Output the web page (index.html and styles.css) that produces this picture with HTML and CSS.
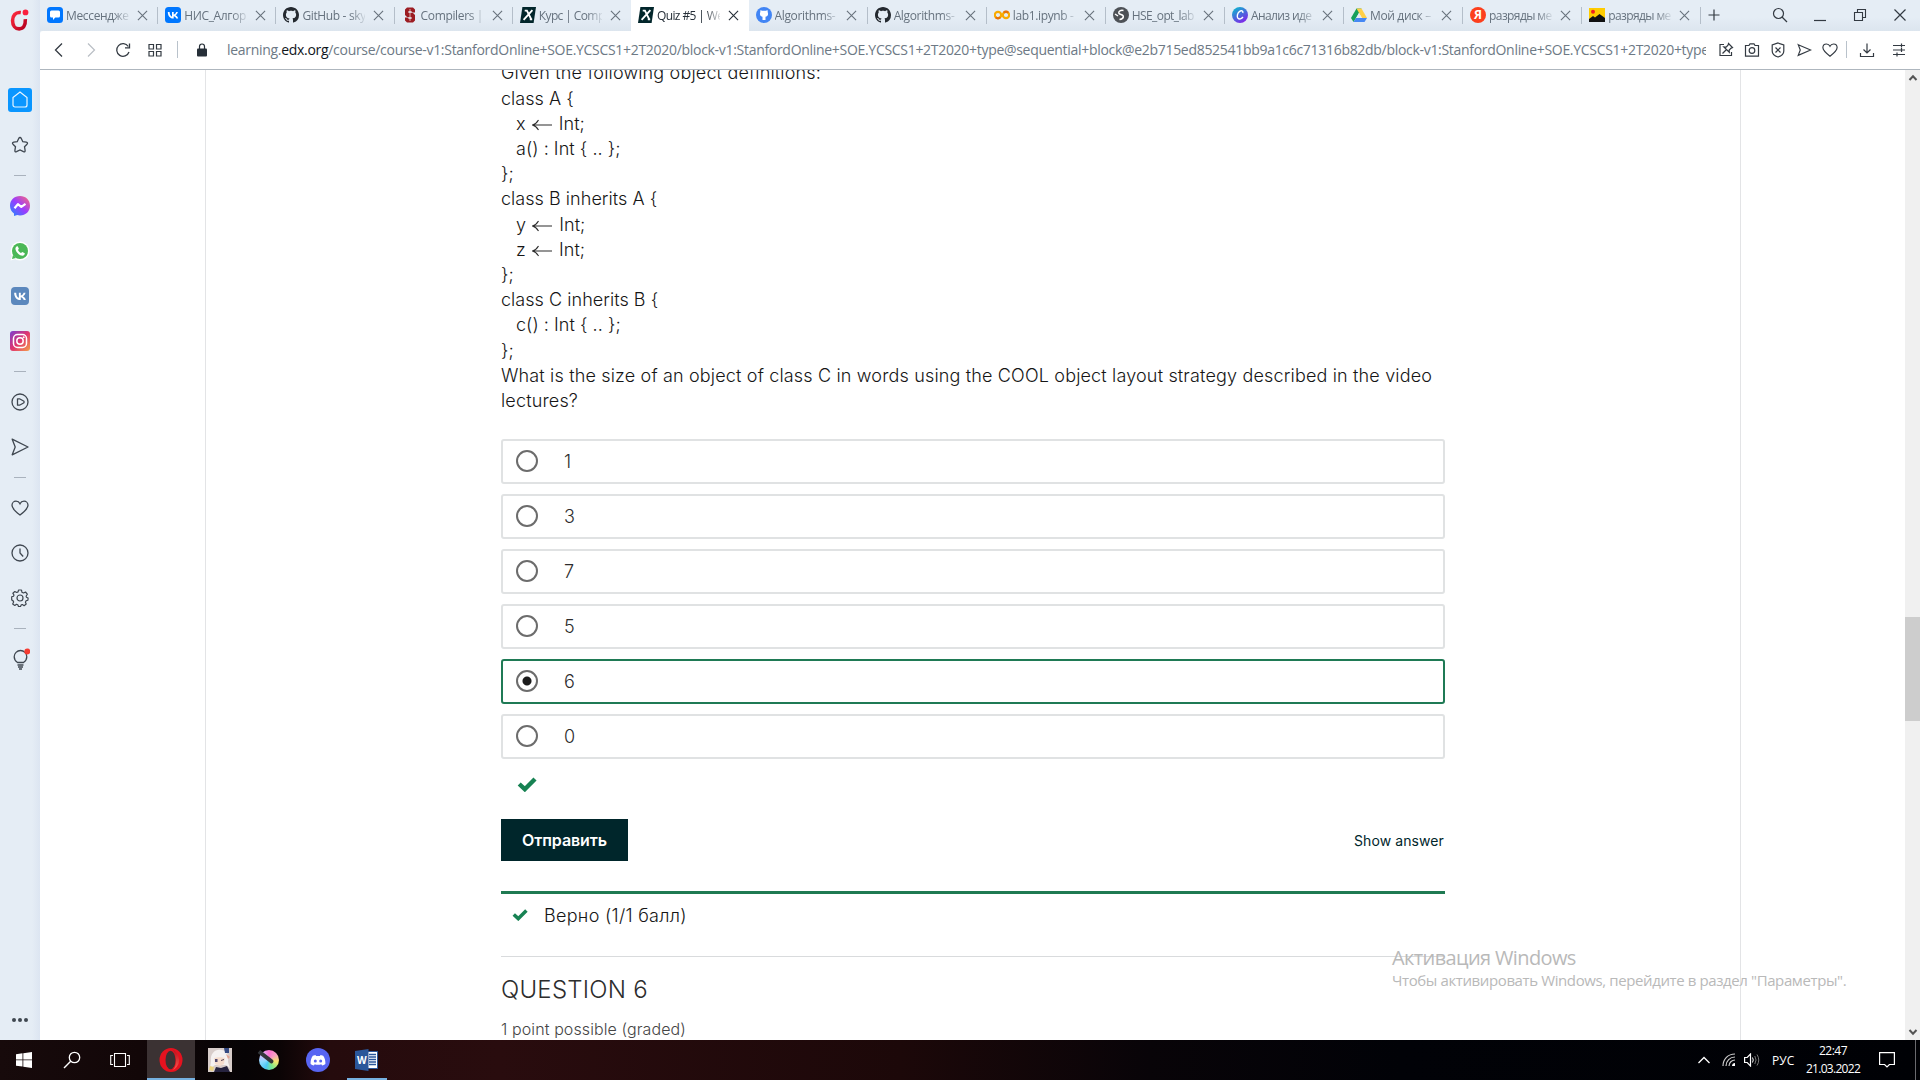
FILE: index.html
```html
<!DOCTYPE html>
<html lang="ru">
<head>
<meta charset="utf-8">
<title>Quiz #5 | Week 5 | Compilers</title>
<link rel="stylesheet" href="styles.css">
</head>
<body>
<svg class="defs" width="0" height="0">
  <defs>
    <linearGradient id="gMsg" x1="0" y1="1" x2="1" y2="0"><stop offset="0" stop-color="#1a8cff"/><stop offset=".5" stop-color="#9a3cff"/><stop offset="1" stop-color="#ff6d73"/></linearGradient>
    <linearGradient id="gIg" x1="0" y1="0" x2="1" y2="1"><stop offset="0" stop-color="#7a3fd0"/><stop offset=".5" stop-color="#e0356f"/><stop offset="1" stop-color="#f5a04b"/></linearGradient>
    <linearGradient id="gCanva" x1="0" y1="0" x2=".6" y2="1"><stop offset="0" stop-color="#00c4cc"/><stop offset="1" stop-color="#7d2ae8"/></linearGradient>
    <linearGradient id="gOpera" x1="0" y1="0" x2="1" y2="1"><stop offset="0" stop-color="#ff2b3f"/><stop offset="1" stop-color="#b4001e"/></linearGradient>
    <linearGradient id="gOperaIn" x1="0" y1="0" x2="0" y2="1"><stop offset="0" stop-color="#b30f1c"/><stop offset="1" stop-color="#ff5a50"/></linearGradient>
    <symbol id="x" viewBox="0 0 12 12"><path d="M1 1l10 10M11 1L1 11" fill="none" stroke="currentColor" stroke-width="1.2"/></symbol>
    <symbol id="github" viewBox="0 0 16 16"><path fill="currentColor" fill-rule="evenodd" d="M8 0C3.58 0 0 3.58 0 8c0 3.54 2.29 6.53 5.47 7.59.4.07.55-.17.55-.38 0-.19-.01-.82-.01-1.49-2.01.37-2.53-.49-2.69-.94-.09-.23-.48-.94-.82-1.13-.28-.15-.68-.52-.01-.53.63-.01 1.08.58 1.23.82.72 1.21 1.87.87 2.33.66.07-.52.28-.87.51-1.07-1.78-.2-3.64-.89-3.64-3.95 0-.87.31-1.59.82-2.15-.08-.2-.36-1.02.08-2.12 0 0 .67-.21 2.2.82.64-.18 1.32-.27 2-.27s1.36.09 2 .27c1.53-1.04 2.2-.82 2.2-.82.44 1.1.16 1.92.08 2.12.51.56.82 1.27.82 2.15 0 3.07-1.87 3.75-3.65 3.95.29.25.54.73.54 1.48 0 1.07-.01 1.93-.01 2.2 0 .21.15.46.55.38A8.01 8.01 0 0016 8c0-4.42-3.58-8-8-8z"/></symbol>
    <symbol id="edx" viewBox="0 0 16 16"><path fill="#02262b" d="M2.4 0H16l-2.4 16H0z"/><path d="M4.7 3.6h2.2l4.4 8.8M12.4 3.2l-8.8 9.6M9.8 12.4h2.4" fill="none" stroke="#fff" stroke-width="1.9"/></symbol>
    <symbol id="vk" viewBox="0 0 16 16"><path fill="#fff" d="M8.6 11.6C5 11.6 2.9 9.1 2.8 5h1.8c.1 3 1.4 4.3 2.4 4.5V5h1.7v2.6c1-.1 2.1-1.3 2.500-2.6h1.700c-.3 1.600-1.400 2.700-2.300 3.200.8.4 2.100 1.400 2.600 3.400h-1.900c-.4-1.300-1.400-2.200-2.600-2.400v2.400z"/></symbol>
    <symbol id="heart" viewBox="0 0 18 18"><path d="M9 16C4 12.300 1 9.500 1 6.300 1 3.900 2.800 2.200 5 2.200c1.700 0 3.200.9 4 2.500.8-1.600 2.300-2.500 4-2.500 2.200 0 4 1.700 4 4.100 0 3.200-3 6-8 9.700z" fill="none" stroke="currentColor" stroke-width="1.300"/></symbol>
    <symbol id="send" viewBox="0 0 18 18"><path d="M1.200 1.200L17 9 1.200 16.800 4.200 9z" fill="none" stroke="currentColor" stroke-width="1.300" stroke-linejoin="round"/></symbol>
    <symbol id="check" viewBox="0 0 20 16"><path d="M2.200 8l5.600 5.200L18 3" fill="none" stroke="#178253" stroke-width="4.400"/></symbol>
    <symbol id="arrow" viewBox="0 0 20 12"><path d="M.5 6H20M6.500 1C5 3.500 3 5.300.5 6 3 6.700 5 8.500 6.500 11" fill="none" stroke="#2d2d2d" stroke-width="1.100"/></symbol>
  </defs>
</svg>

<div class="desktop">
  <div class="browser">
    <aside class="sidebar">
      <svg class="logo" viewBox="0 0 22 26"><path d="M12 4.200C5.500 3.200 2.200 8 2.200 13.500 2.200 19.500 5.500 23.500 10 23.500c5 0 7.600-4 7.300-11.500" fill="none" stroke="url(#gOpera)" stroke-width="4.200"/><circle cx="17.500" cy="4" r="3.400" fill="#fa1e3c"/></svg>
      <div class="side-list">
        <div class="side home"><svg width="16" height="18" viewBox="0 0 16 18"><path d="M1 6.500L8 1l7 5.500V14a2 2 0 0 1-2 2H3a2 2 0 0 1-2-2z" fill="none" stroke="#e8f5ff" stroke-width="1.200"/></svg></div>
        <div class="side"><svg width="18" height="18" viewBox="0 0 18 18"><path d="M9 1.500q.8 0 1.300 1l1.500 3.200 3.500.5q2 .4.700 2L13.500 10.700l.6 3.600q.2 2-1.600 1.300L9 14l-3.500 1.600q-1.800.7-1.600-1.300l.6-3.600L2 8.200q-1.300-1.600.7-2l3.500-.5L7.700 2.500q.5-1 1.300-1z" fill="none" stroke="currentColor" stroke-width="1.300"/></svg></div>
        <i class="side-sep"></i>
        <div class="side"><svg width="20" height="20" viewBox="0 0 20 20"><path d="M10 0c5.800 0 10 4.200 10 9.700s-4.200 9.700-10 9.700c-1 0-1.900-.1-2.800-.4L4 20v-2.600C1.500 15.500 0 13 0 9.700 0 4.200 4.200 0 10 0z" fill="url(#gMsg)"/><path d="M4.500 12.200l3.400-4 3.400 2.600 4.200-3" fill="none" stroke="#fff" stroke-width="2.200" stroke-linejoin="round"/></svg></div>
        <div class="side"><svg width="20" height="20" viewBox="0 0 20 20"><circle cx="10" cy="10" r="9.500" fill="#fff"/><path d="M.5 19.500l1.500-5 4 3.500z" fill="#fff"/><circle cx="10" cy="10" r="8" fill="#4bb857"/><path d="M2 18l1-4 3 3z" fill="#4bb857"/><path d="M6.500 5.500l1.200-.3 1.200 2.600-.9 1.300c.7 1.500 1.600 2.300 3 3l1.300-1 2.500 1.200c0 1.600-1 2.400-2.400 2.400-3.500-.3-6.600-3.500-7-6.900 0-1 .4-1.800 1.100-2.300z" fill="#fff"/></svg></div>
        <div class="side"><svg width="18" height="18" viewBox="0 0 16 16"><rect width="16" height="16" rx="3.500" fill="#5b88bd"/><use href="#vk"/></svg></div>
        <div class="side"><svg width="20" height="20" viewBox="0 0 20 20"><rect width="20" height="20" rx="3" fill="url(#gIg)"/><rect x="3.500" y="3.500" width="13" height="13" rx="4" fill="none" stroke="#fff" stroke-width="1.500"/><circle cx="10" cy="10" r="3.200" fill="none" stroke="#fff" stroke-width="1.500"/><circle cx="13.700" cy="6.300" r="1" fill="#fff"/></svg></div>
        <i class="side-sep"></i>
        <div class="side"><svg width="18" height="18" viewBox="0 0 18 18"><circle cx="9" cy="9" r="8" fill="none" stroke="currentColor" stroke-width="1.300"/><path d="M6.500 5.800v6.400h2L13 9.800V8.200L8.500 5.800z" fill="none" stroke="currentColor" stroke-width="1.300" stroke-linejoin="round"/></svg></div>
        <div class="side"><svg width="18" height="18"><use href="#send"/></svg></div>
        <i class="side-sep"></i>
        <div class="side"><svg width="18" height="18"><use href="#heart"/></svg></div>
        <div class="side"><svg width="18" height="18" viewBox="0 0 18 18"><circle cx="9" cy="9" r="8" fill="none" stroke="currentColor" stroke-width="1.300"/><path d="M9 4.500V9l3.200 3.500" fill="none" stroke="currentColor" stroke-width="1.300"/></svg></div>
        <div class="side"><svg width="18" height="18" viewBox="0 0 18 18"><path d="M7.500 1h3l.4 2.200 1.600.8 2-1 1.800 2.200-1.200 2 .3 1 1.700.8-.2 2.200-1.800.6-.7 1.400.8 1.800-2.100 1.700-1.700-1.200-1.200.4-.7 1.600H7.500l-.7-1.800-1.300-.4-1.700 1.200-2.100-1.600.9-2-.7-1.300L.7 11V7.800l1.800-.6.500-1.200-1.100-1.700L3.800 2.500l1.900 1 1.400-.6z" fill="none" stroke="currentColor" stroke-width="1.200" stroke-linejoin="round"/><circle cx="9" cy="9" r="3" fill="none" stroke="currentColor" stroke-width="1.200"/></svg></div>
        <i class="side-sep"></i>
        <div class="side"><svg width="20" height="22" viewBox="0 0 20 22"><path d="M7.500 14.500C5.500 13.200 4.200 11.300 4.200 8.800a6.300 6.300 0 0 1 12.600 0c0 2.500-1.300 4.400-3.300 5.700zM7.500 17h6M8 19h5M9 21h3" fill="none" stroke="currentColor" stroke-width="1.300"/><circle cx="17.300" cy="3.500" r="3" fill="#f53b30"/></svg></div>
      </div>
      <div class="dots"><i></i><i></i><i></i></div>
    </aside>

    <div class="main">
      <div class="tabbar">
        <div class="tab lead"><svg class="fav" viewBox="0 0 16 16"><rect width="16" height="16" rx="3.500" fill="#07f"/><path d="M4.500 3.500h7q1.500 0 1.500 1.500v4q0 1.500-1.500 1.500H8.300L6 13v-2.500H4.500Q3 10.500 3 9V5q0-1.500 1.500-1.500z" fill="#fff"/></svg><span>Мессендже</span><svg class="cl"><use href="#x"/></svg></div>
        <div class="tab lead"><svg class="fav" viewBox="0 0 16 16"><rect width="16" height="16" rx="3.500" fill="#07f"/><use href="#vk"/></svg><span>НИС_Алгор</span><svg class="cl"><use href="#x"/></svg></div>
        <div class="tab lead"><svg class="fav dark"><use href="#github"/></svg><span>GitHub - sky</span><svg class="cl"><use href="#x"/></svg></div>
        <div class="tab lead"><svg class="fav" viewBox="0 0 16 16"><path d="M5 .5h6l2 2v3H9.500V4h-3v2H11l2 2v5.500l-2 2H5l-2-2v-3h3.500V12h3v-2H5L3 8V2.500z" fill="#9c1c22"/><path d="M8 2v12" stroke="#d9aaa9" stroke-width="1"/></svg><span>Compilers |</span><svg class="cl"><use href="#x"/></svg></div>
        <div class="tab lead last"><svg class="fav"><use href="#edx"/></svg><span class="tight">Курс | Comp</span><svg class="cl"><use href="#x"/></svg></div>
        <div class="tab active"><svg class="fav"><use href="#edx"/></svg><span class="tight">Quiz #5 | We</span><svg class="cl"><use href="#x"/></svg></div>
        <div class="tab"><svg class="fav" viewBox="0 0 16 16"><circle cx="8" cy="8" r="8" fill="#4285f4"/><path d="M4.500 3l1.500.8h4l1.500-.8.300 2.500c1 3-1 4-2.300 4.300V13h-3V9.800C5.200 9.500 3.200 8.500 4.200 5.500z" fill="#fff"/></svg><span>Algorithms-</span><svg class="cl"><use href="#x"/></svg></div>
        <div class="tab"><svg class="fav dark"><use href="#github"/></svg><span>Algorithms-</span><svg class="cl"><use href="#x"/></svg></div>
        <div class="tab"><svg class="fav" viewBox="0 0 16 16"><circle cx="4" cy="8" r="3.200" fill="none" stroke="#f9ab00" stroke-width="2.200"/><circle cx="12" cy="8" r="3.200" fill="none" stroke="#f9ab00" stroke-width="2.200"/><path d="M1.700 10.300a3.200 3.200 0 0 0 4.600 0M9.700 5.700a3.200 3.200 0 0 1 4.600 0" fill="none" stroke="#e8710a" stroke-width="2.200"/></svg><span>lab1.ipynb -</span><svg class="cl"><use href="#x"/></svg></div>
        <div class="tab"><svg class="fav" viewBox="0 0 16 16"><circle cx="8" cy="8" r="8" fill="#4d5156"/><path d="M10.500 3.500C7.500 3 5.500 4 5.800 6c.4 2 5 1.200 4.500 4-.3 1.500-2 2.300-3.800 2.500M2 7l3 2" fill="none" stroke="#fff" stroke-width="1.500"/></svg><span class="tight">HSE_opt_lab</span><svg class="cl"><use href="#x"/></svg></div>
        <div class="tab"><svg class="fav" viewBox="0 0 16 16"><circle cx="8" cy="8" r="8" fill="url(#gCanva)"/><path d="M10.800 6c.6-2-1.300-3-3.200-1.600C5.300 6 4.600 9.700 6 11.300c1.300 1.300 3.600.6 5-1.300" fill="none" stroke="#fff" stroke-width="1.400"/></svg><span class="tight">Анализ иде</span><svg class="cl"><use href="#x"/></svg></div>
        <div class="tab"><svg class="fav" viewBox="0 0 16 16"><path d="M5.500 1.500h5L5 11l-2.500 4L0 11z" fill="#17a05d"/><path d="M5.500 1.500h5L16 11h-5z" fill="#ffcf48"/><path d="M5 11h11l-2.500 4h-11z" fill="#4688f4"/><path d="M8 6l2.800 5H5.200z" fill="#e5edf5"/></svg><span>Мой диск –</span><svg class="cl"><use href="#x"/></svg></div>
        <div class="tab"><b class="fav ya">Я</b><span class="tight">разряды ме</span><svg class="cl"><use href="#x"/></svg></div>
        <div class="tab"><svg class="fav" viewBox="0 0 16 16"><path d="M0 1h16v14H0z" fill="#fc0"/><path d="M0 15v-3l4-3 2 1.500L10.500 7 16 11v4z" fill="#111"/><circle cx="4" cy="4.800" r="2" fill="#f01f1f"/></svg><span class="tight">разряды ме</span><svg class="cl"><use href="#x"/></svg></div>
        <svg class="plus" viewBox="0 0 12 12"><path d="M6 .5v11M.5 6h11" stroke="#333a42" stroke-width="1.200"/></svg>
        <div class="winctl">
          <svg viewBox="0 0 16 16"><circle cx="6.500" cy="6.500" r="5" fill="none" stroke="currentColor" stroke-width="1.200"/><path d="M10 10l5 5" stroke="currentColor" stroke-width="1.200"/></svg>
          <svg viewBox="0 0 16 16"><path d="M2 13.500h12" stroke="currentColor" stroke-width="1.200"/></svg>
          <svg viewBox="0 0 16 16"><path d="M2.500 5.500h8v8h-8zM5.500 5.500v-3h8v8h-3" fill="none" stroke="currentColor" stroke-width="1.100"/></svg>
          <svg viewBox="0 0 16 16"><path d="M2.500 2.500l11 11M13.500 2.500l-11 11" stroke="currentColor" stroke-width="1.200"/></svg>
        </div>
      </div>

      <div class="toolbar">
        <div class="nav">
          <svg viewBox="0 0 16 16"><path d="M11 1.500L4.500 8 11 14.500" fill="none" stroke="currentColor" stroke-width="1.300"/></svg>
          <svg class="off" viewBox="0 0 16 16"><path d="M5 1.500L11.500 8 5 14.500" fill="none" stroke="currentColor" stroke-width="1.200"/></svg>
          <svg viewBox="0 0 16 16"><path d="M14 10A6.300 6.300 0 1 1 13.300 4.500" fill="none" stroke="currentColor" stroke-width="1.300"/><path d="M14.500 1.500v4.300H10" fill="none" stroke="currentColor" stroke-width="1.300"/></svg>
          <svg viewBox="0 0 16 16"><path d="M2 2.500h4.500V7H2zM9.500 2.500H14V7H9.500zM2 9.500h4.500V14H2zM9.500 9.500H14V14H9.500z" fill="none" stroke="currentColor" stroke-width="1.200"/></svg>
        </div>
        <i class="vsep"></i>
        <svg class="lock" viewBox="0 0 12 14"><rect x="1" y="5.500" width="10" height="8" rx="1" fill="#262f38"/><path d="M3.500 6V3.500a2.500 2.500 0 0 1 5 0V6" fill="none" stroke="#262f38" stroke-width="1.200"/></svg>
        <div class="url">learning.<b>edx.org</b>/course/course-v1:StanfordOnline+SOE.YCSCS1+2T2020/block-v1:StanfordOnline+SOE.YCSCS1+2T2020+type@sequential+block@e2b715ed852541bb9a1c6c71316b82db/block-v1:StanfordOnline+SOE.YCSCS1+2T2020+type@vertical</div>
        <div class="actions">
          <svg viewBox="0 0 16 16"><path d="M6 2.500H2v11h11.500V10" fill="none" stroke="currentColor" stroke-width="1.200"/><path d="M10.500 1.500l4 4-1.300.6-2 2 .1 2.200L5.800 5l2.300.1 1.900-2zM8.500 7.500L4.500 11.500" fill="none" stroke="currentColor" stroke-width="1.200"/></svg>
          <svg viewBox="0 0 16 16"><path d="M1.500 3.500H5l1-1.700h4l1 1.700h3.500v10.700h-13z" fill="none" stroke="currentColor" stroke-width="1.200"/><circle cx="8" cy="8.500" r="2.800" fill="none" stroke="currentColor" stroke-width="1.200"/></svg>
          <svg viewBox="0 0 16 16"><path d="M8 1l5.800 2v6c0 3-2.500 5-5.800 6-3.300-1-5.800-3-5.800-6V3z" fill="none" stroke="currentColor" stroke-width="1.200"/><path d="M5.500 5.500l5 5M10.500 5.500l-5 5" stroke="currentColor" stroke-width="1.200"/></svg>
          <svg viewBox="0 0 18 18"><path d="M2.500 3L16.500 9 2.500 15l2.300-6z" fill="none" stroke="currentColor" stroke-width="1.300"/></svg>
          <svg><use href="#heart"/></svg>
        </div>
        <i class="vsep"></i>
        <svg class="dl" viewBox="0 0 16 16"><path d="M8 1.500v9M4.500 7.500L8 11l3.500-3.500M1.500 11v3.500h13V11" fill="none" stroke="currentColor" stroke-width="1.200"/></svg>
        <svg class="opt" viewBox="0 0 16 16"><path d="M2 3.500h12M2 8h12M2 12.500h12M10.500 1.500v4M10.500 6v4M6 10.500v4" fill="none" stroke="currentColor" stroke-width="1.200"/></svg>
      </div>

      <div class="viewport">
        <div class="page">
          <div class="unit">
            <div class="problem">
              <div class="ask">Given the following object definitions:</div>
              <div>class A {</div>
              <div class="in">x <svg class="ar"><use href="#arrow"/></svg> Int;</div>
              <div class="in">a() : Int { .. };</div>
              <div>};</div>
              <div>class B inherits A {</div>
              <div class="in">y <svg class="ar"><use href="#arrow"/></svg> Int;</div>
              <div class="in">z <svg class="ar"><use href="#arrow"/></svg> Int;</div>
              <div>};</div>
              <div>class C inherits B {</div>
              <div class="in">c() : Int { .. };</div>
              <div>};</div>
              <div class="ask">What is the size of an object of class C in words using the COOL object layout strategy described in the video lectures?</div>
            </div>
            <div class="choices">
              <label class="choice"><i class="radio"></i>1</label>
              <label class="choice"><i class="radio"></i>3</label>
              <label class="choice"><i class="radio"></i>7</label>
              <label class="choice"><i class="radio"></i>5</label>
              <label class="choice correct"><i class="radio on"></i>6</label>
              <label class="choice"><i class="radio"></i>0</label>
            </div>
            <svg class="mark"><use href="#check"/></svg>
            <div class="submit-row"><button class="submit">Отправить</button><span class="show">Show answer</span></div>
            <div class="result"><svg><use href="#check"/></svg>Верно (1/1 балл)</div>
            <h3 class="q">QUESTION 6</h3>
            <div class="pts">1 point possible (graded)</div>
          </div>
        </div>
        <div class="scroll">
          <svg viewBox="0 0 10 8"><path d="M1.500 6L5 2.200 8.500 6" fill="none" stroke="#555" stroke-width="2"/></svg>
          <i class="thumb"></i>
          <svg viewBox="0 0 10 8"><path d="M1.500 2L5 5.800 8.500 2" fill="none" stroke="#555" stroke-width="2"/></svg>
        </div>
      </div>
    </div>
  </div>

  <div class="taskbar">
    <div class="apps">
      <div class="app"><svg width="16" height="16" viewBox="0 0 16 16"><path d="M0 2.200l6.500-.9v6.200H0zM7.300 1.200L16 0v7.500H7.300zM0 8.300h6.500v6.300L0 13.700zM7.300 8.300H16V16l-8.700-1.200z" fill="#fff"/></svg></div>
      <div class="app"><svg width="18" height="18" viewBox="0 0 18 18"><circle cx="11.500" cy="6.500" r="5.200" fill="none" stroke="#fff" stroke-width="1.300"/><path d="M7.700 10.300L1 17" stroke="#fff" stroke-width="1.400"/></svg></div>
      <div class="app"><svg width="20" height="16" viewBox="0 0 20 16"><path d="M4.500 1.500h11v13h-11zM3 3.500H.7v9H3M17 3.500h2.300v9H17" fill="none" stroke="#fff" stroke-width="1.100"/></svg></div>
      <div class="app opera run"><svg width="24" height="24" viewBox="0 0 24 24"><ellipse cx="12" cy="12" rx="11.500" ry="12" fill="#e5121f"/><path d="M12 1a11.500 11.500 0 0 1 0 22c4-2 5-6 5-11s-1-9-5-11z" fill="url(#gOperaIn)"/><ellipse cx="11.500" cy="12" rx="5" ry="9.200" fill="#3b3233"/></svg></div>
      <div class="app w49"><svg width="24" height="24" viewBox="0 0 24 24"><path d="M0 0h24v24H0z" fill="#d8cdca"/><path d="M3 13C2 6 7 1 13 2c6 0 8 6 7 12l2 6-4-3H7l-5 4z" fill="#f5f1f0"/><path d="M6 10c3-1 8-1 11 0l-1 6-4 2-5-2z" fill="#f6ddcd"/><path d="M7 11h2.500v3H7z" fill="#51496f"/><path d="M13 12.500l3-1" stroke="#5a4554"/><path d="M6 24l2-5 5 1 6-2 3 6z" fill="#26233f"/><path d="M16 0h5v5h-4z" fill="#354a82"/><path d="M2 18l4 1-1 4-4-1z" fill="#ead27f"/><path d="M18 6l4 3-2 2z" fill="#e3a493"/></svg></div>
      <div class="app w49"><i class="krita"></i></div>
      <div class="app w49"><svg width="24" height="24" viewBox="0 0 24 24"><circle cx="12" cy="12" r="12" fill="#5865f2"/><path d="M9.500 7l-2.700.7C5.200 10 4.400 12.800 4.600 16c1 .8 2.100 1.300 3.300 1.600l.8-1.300c2.200.7 4.400.7 6.600 0l.8 1.300c1.200-.3 2.300-.8 3.300-1.600.2-3.200-.6-6-2.200-8.300L14.500 7l-.5.9h-4z" fill="#fff"/><circle cx="9.300" cy="13" r="1.500" fill="#5865f2"/><circle cx="14.700" cy="13" r="1.500" fill="#5865f2"/></svg></div>
      <div class="app word run"><svg width="24" height="22" viewBox="0 0 24 22"><path d="M12 2.500h10.500v17H12z" fill="#fff" stroke="#2b579a"/><path d="M14 5.500h7M14 8h7M14 10.500h7M14 13h7M14 15.500h7" stroke="#2b579a" stroke-width="1.300"/><path d="M0 2L13.500 0v22L0 20z" fill="#2b579a"/></svg><b>W</b></div>
    </div>
    <div class="tray">
      <svg width="12" height="8" viewBox="0 0 12 8"><path d="M.5 7L6 1.500 11.500 7" fill="none" stroke="#fff" stroke-width="1.300"/></svg>
      <svg width="14" height="14" viewBox="0 0 14 14"><path d="M1 13C1 6 6 1 13 1M4 13c0-5 4-9 9-9M7 13c0-3.300 2.700-6 6-6" fill="none" stroke="#ccc" stroke-width="1.200"/><path d="M10 13c0-1.700 1.300-3 3-3v3z" fill="#fff"/></svg>
      <svg width="16" height="14" viewBox="0 0 16 14"><path d="M.6 4.500h2.600L6.500 1v12L3.200 9.500H.6z" fill="none" stroke="#fff" stroke-width="1.200"/><path d="M8.500 4.500q1.500 2.500 0 5" fill="none" stroke="#fff"/><path d="M10.800 3q2.500 4 0 8M13 1.500q3.500 5.500 0 11" fill="none" stroke="#777"/></svg>
      <span class="lang">РУС</span>
      <div class="clock"><span>22:47</span><span class="date">21.03.2022</span></div>
      <svg class="note" width="16" height="16" viewBox="0 0 16 16"><path d="M.6.600h14.800v11.900h-5L8 15l-2.400-2.500h-5z" fill="none" stroke="#fff" stroke-width="1.200"/></svg>
      <i class="peek"></i>
    </div>
  </div>

  <div class="activation"><div>Активация Windows</div><p>Чтобы активировать Windows, перейдите в раздел "Параметры".</p></div>
</div>
</body>
</html>
```

FILE: styles.css
```css
* { box-sizing: border-box; }
body { margin: 0; overflow: hidden; font-family: "Open Sans", "Noto Sans", sans-serif; }
svg { display: block; flex: none; }
.defs { position: absolute; }

.desktop { position: relative; display: flex; flex-direction: column; width: 1920px; height: 1080px; overflow: hidden; }
.browser { display: flex; height: 1040px; background: #e5edf5; }

/* sidebar */
.sidebar { flex: none; width: 40px; display: flex; flex-direction: column; color: #3f4750; background: linear-gradient(90deg, #e5edf5 80%, #dce5f1); }
.logo { width: 20px; height: 22px; margin: 9px 0 0 10px; }
.side-list { display: flex; flex-direction: column; gap: 21px; align-items: center; margin-top: 57px; }
.side { width: 24px; height: 24px; display: flex; align-items: center; justify-content: center; }
.home { background: #0a96ff; border-radius: 3px; }
.side-sep { width: 12px; height: 1px; background: #a9b2bd; margin: -3px 0; }
.dots { display: flex; justify-content: center; gap: 2px; margin-top: auto; margin-bottom: 18px; }
.dots i { width: 4px; height: 4px; border-radius: 50%; background: #3f4750; }

.main { flex: 1; min-width: 0; display: flex; flex-direction: column; }

/* tabs */
.tabbar { flex: none; height: 31px; display: flex; align-items: center; background: linear-gradient(#e5edf5 55%, #dce5ee); }
.tab { position: relative; flex: none; width: 119.1px; height: 31px; display: flex; align-items: center; padding-left: 7px; padding-bottom: 1px; color: #66727e; }
.tab.lead { width: 118.2px; }
.tab::after { content: ""; position: absolute; right: 0; top: 7px; width: 1px; height: 17px; background: #b4bec9; }
.tab.active { width: 117.6px; background: #fff; color: #262f38; }
.tab.active::after, .tab.last::after { display: none; }
.fav { width: 16px; height: 16px; }
.dark { color: #24292f; }
.ya { flex: none; border-radius: 50%; background: #fc3f1d; color: #fff; font-size: 12px; line-height: 16px; text-align: center; }
.tab span { width: 63px; margin-left: 3px; overflow: hidden; white-space: nowrap; font-size: 12px; letter-spacing: -.35px; -webkit-mask-image: linear-gradient(90deg, #000 76%, rgba(0,0,0,.15)); mask-image: linear-gradient(90deg, #000 76%, rgba(0,0,0,.15)); }
.tab .tight { letter-spacing: -.6px; }
.cl { width: 11px; height: 11px; margin-left: 8px; color: #68727c; }
.active .cl { color: #262f38; }
.plus { width: 12px; height: 12px; margin: 0 0 1px 7px; }
.winctl { display: flex; gap: 24px; margin: 0 12px 1px auto; color: #333a42; }
.winctl svg { width: 16px; height: 16px; }

/* address bar */
.toolbar { flex: none; height: 39px; display: flex; align-items: center; padding-bottom: 1px; background: #fff; border-bottom: 1px solid #aeb6be; border-top-left-radius: 3px; color: #333a42; }
.nav { display: flex; gap: 16px; margin-left: 11px; }
.nav svg { width: 16px; height: 16px; }
.nav .off { color: #b9bec4; }
.vsep { flex: none; width: 1px; height: 17px; background: #b9c2cb; }
.nav + .vsep { margin-left: 14px; }
.lock { width: 12px; height: 14px; margin-left: 18px; }
.url { width: 1479px; margin-left: 19px; overflow: hidden; white-space: nowrap; font-size: 14px; letter-spacing: -.3px; color: #6d7985; }
.url b { font-weight: 400; color: #10161c; }
.actions { display: flex; gap: 10px; margin-left: 12px; margin-right: 8px; }
.actions svg { width: 16px; height: 16px; }
.dl { width: 16px; height: 16px; margin-left: 12px; }
.opt { width: 16px; height: 16px; margin-left: 16px; }

/* course page */
.viewport { flex: 1; min-height: 0; display: flex; background: #fff; overflow: hidden; }
.page { width: 1536px; margin-left: 165px; margin-right: auto; height: 970px; overflow: hidden; border: solid #e3e4e6; border-width: 0 1px; }
.unit { width: 944px; margin-left: 295px; margin-top: -9.6px; font-family: Inter, sans-serif; font-size: 18px; font-weight: 300; color: #161616; }
.problem { line-height: 25.2px; letter-spacing: .04px; }
.ask { letter-spacing: .162px; }
.in { padding-left: 15px; }
.ar { display: inline-block; width: 20px; height: 12px; vertical-align: -1px; margin: 0 2px 0 1px; }
.choices { display: flex; flex-direction: column; gap: 10px; margin-top: 25.6px; }
.choice { height: 45px; display: flex; align-items: center; padding-left: 13px; border: 2px solid #e0e2e3; border-radius: 3px; color: #2d2d2d; }
.choice.correct { border-color: #1f7a55; }
.radio { width: 22px; height: 22px; margin-right: 26px; margin-bottom: 1px; border: 2px solid #6c6c6c; border-radius: 50%; }
.radio.on { background: radial-gradient(circle, #1c1c1c 4px, transparent 5px); }
.mark { width: 20px; height: 16px; margin: 17px 0 0 16px; }
.submit-row { display: flex; align-items: center; justify-content: space-between; margin-top: 27px; }
.submit { width: 127px; height: 42px; padding: 0; border: 0; background: #00262b; color: #fff; font: 600 16px Inter, sans-serif; letter-spacing: -.1px; }
.show { margin: 2px 1px 0 0; font-size: 14px; font-weight: 400; letter-spacing: .1px; color: #00262b; }
.result { height: 66px; margin-top: 30px; padding: 10px 0 0 11px; display: flex; align-items: flex-start; border-top: 3px solid #1f7a52; border-bottom: 1px solid #d9dbdd; line-height: 24px; letter-spacing: .3px; }
.result svg { width: 16px; height: 13px; margin: 4px 16px 0 0; }
.q { margin: 18px 0 0; font-size: 24px; line-height: 29px; font-weight: 300; letter-spacing: .24px; color: #2d2d2d; }
.pts { margin-top: 15px; font-size: 16px; line-height: 20px; color: #454545; letter-spacing: .1px; }

.scroll { flex: none; width: 15px; display: flex; flex-direction: column; align-items: center; background: #f0f0f0; padding: 4px 0; }
.scroll svg { width: 10px; height: 8px; }
.thumb { width: 15px; height: 104px; margin-top: 535px; margin-bottom: auto; background: #cdcdcd; }

/* taskbar */
.taskbar { flex: none; height: 40px; display: flex; justify-content: space-between; background: linear-gradient(90deg, #170a0b 0, #120708 140px, #060305 245px, #0b0405 280px, #250b0d 330px, #290c0e 500px, #1c0809 900px, #080408 1150px, #010207 1400px, #000105 1920px); color: #fff; }
.apps { display: flex; }
.app { width: 48px; height: 40px; display: flex; align-items: center; justify-content: center; }
.app.opera { width: 48px; margin-left: 3px; background: #3b3233; }
.w49 { width: 49px; }
.run { box-shadow: inset 0 -2px #76b1e0; }
.word { position: relative; width: 40px; margin-left: 5px; }
.word b { position: absolute; left: 10px; top: 13px; font-size: 10px; line-height: 14px; }
.krita { position: relative; width: 20px; height: 20px; border-radius: 50%; background: conic-gradient(#ff70d0, #f7a0c0, #f5e56b, #7de88a, #4cc9f5, #8fdcff, #d8b8ff, #ff70d0); }
.krita::after { content: ""; position: absolute; left: -2px; top: 5px; width: 18px; height: 4px; border-radius: 0 3px 3px 0; background: #33363a; transform: rotate(38deg); }
.tray { display: flex; align-items: center; font-size: 12px; }
.tray svg + svg { margin-left: 12px; }
.tray svg:nth-child(3) { margin-left: 8px; }
.lang { width: 23px; margin-left: 12px; }
.clock { width: 56px; margin-left: 10px; display: flex; flex-direction: column; text-align: center; line-height: 18px; letter-spacing: -.5px; white-space: nowrap; }
.date { letter-spacing: -.7px; }
.note { margin-left: 18px; }
.peek { width: 1px; height: 40px; margin: 0 4px 0 20px; background: #6a6a6e; }

.activation { position: absolute; left: 1392px; top: 944px; color: #b9b9b9; white-space: nowrap; }
.activation div { font-size: 20px; line-height: 27px; letter-spacing: -.62px; }
.activation p { margin: 0; font-size: 15px; line-height: 18px; letter-spacing: -.39px; }
```
